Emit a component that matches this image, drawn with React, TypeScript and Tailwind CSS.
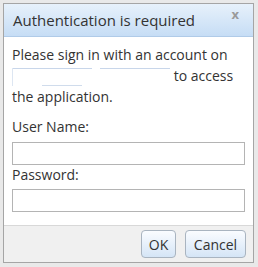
import React from "react";

export default function App() {
  return (
    <div className="w-[258px] h-[267px] bg-[#e9e9e9] p-[3px] pr-[4px] pb-[4px]" style={{ fontFamily: '"Open Sans", "DejaVu Sans", sans-serif' }}>
      <div className="flex flex-col h-full border border-[#a5a5a5] bg-white">
        <div className="h-[33px] flex items-center justify-between pl-[9px] pr-[14px] bg-gradient-to-b from-[#e7f1fb] to-[#c6ddf5] border-b border-[#b0cbe8]">
          <span className="text-[15px] text-[#333]">Authentication is required</span>
          <span className="text-[13px] font-bold text-[#9a9a9a] leading-none -mt-[12px]">x</span>
        </div>
        <div className="flex-1 px-[8px] pt-[7px] text-[14px] leading-[21px] text-[#333]">
          <p>
            Please sign in with an account on{" "}
            <span className="inline-block w-[158px] h-[14px] align-middle relative">
              <span className="absolute left-0 -top-[2px] w-[80px] h-[1px] bg-[#c8d6ea]" />
              <span className="absolute left-[88px] -top-[2px] w-[70px] h-[1px] bg-[#c8d6ea]" />
              <span className="absolute left-0 -top-[2px] w-[1px] h-[18px] bg-[#dde6f2]" />
              <span className="absolute left-[30px] -bottom-[2px] w-[40px] h-[1px] bg-[#d0dcec]" />
            </span>{" "}
            to access the application.
          </p>
          <div className="mt-[10px] leading-[20px]">User Name:</div>
          <div className="mt-[5px] h-[23px] border border-[#b4b4b4]" />
          <div className="leading-[20px]">Password:</div>
          <div className="mt-[4px] h-[23px] border border-[#b4b4b4]" />
        </div>
        <div className="h-[37px] border-t border-[#d8d8d8] bg-[#f0f0f0] flex items-center justify-end gap-[9px] pr-[7px]">
          <button className="w-[35px] h-[28px] rounded-[4px] border border-[#a9b4c0] bg-gradient-to-b from-[#fafcff] to-[#d5e5f6] text-[14px] text-[#333]">OK</button>
          <button className="w-[61px] h-[28px] rounded-[4px] border border-[#a9b4c0] bg-gradient-to-b from-[#fafcff] to-[#d5e5f6] text-[14px] text-[#333]">Cancel</button>
        </div>
      </div>
    </div>
  );
}
